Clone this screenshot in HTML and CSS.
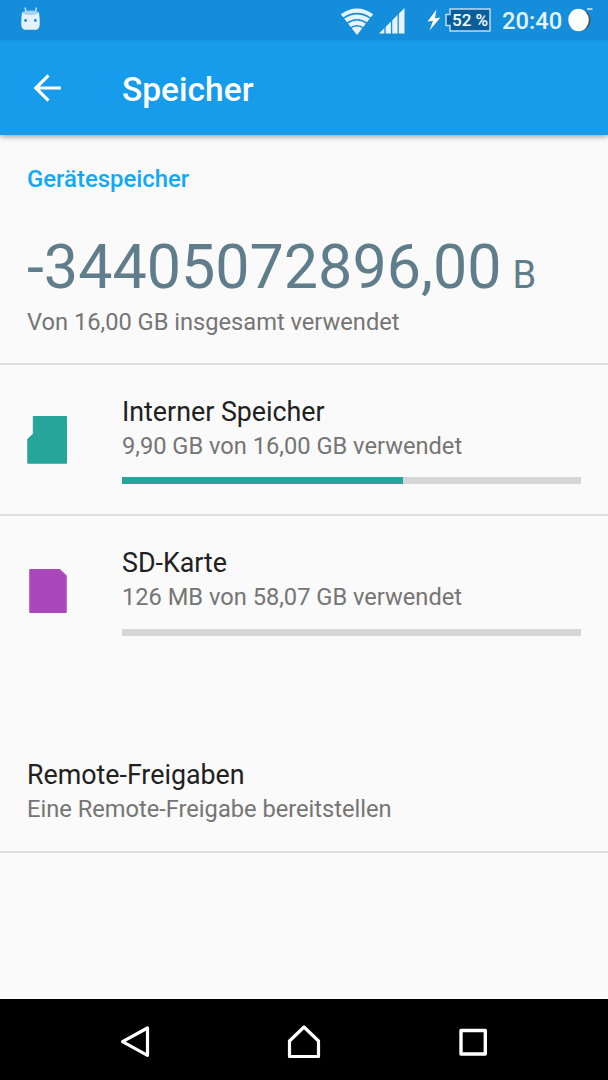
FILE: index.html
```html
<!DOCTYPE html>
<html lang="de">
<head>
<meta charset="utf-8">
<title>Speicher</title>
<link rel="stylesheet" href="styles.css">
</head>
<body>
<div class="screen">
  <div class="status-bar">
    <svg class="robot" width="22" height="26" viewBox="0 0 22 26">
      <path d="M5 .500l1.300 5M16.500 .500l-1.300 5" stroke="#d6ebf9" stroke-width="1.300" fill="none"/>
      <path d="M2 5.500Q1 13 1.300 17.500Q1.500 22.500 5 22.800H16Q19.500 22.500 19.700 17.500Q20 13 19 5.500Z" fill="#e5f2fc"/>
      <ellipse cx="10.500" cy="5.800" rx="8.500" ry="2.200" fill="#a5d2f1"/>
      <circle cx="5.600" cy="13.500" r="1.400" fill="#148ddb"/>
      <circle cx="15.400" cy="13.500" r="1.400" fill="#148ddb"/>
    </svg>
    <svg class="wifi" width="34" height="29" viewBox="0 0 34 29">
      <path d="M17 28L.800 7.200Q17-4 33.200 7.200Z" fill="#e8f4fd"/>
      <path d="M2.500 11.800Q17 1.500 31.500 11.800M6.500 16.600Q17 9 27.500 16.600M10 21.300Q17 16.300 24 21.300" fill="none" stroke="#148ddb" stroke-width="1.600"/>
    </svg>
    <svg class="signal" width="26" height="26" viewBox="0 0 26 26">
      <path d="M0 25.500L25.500 0V25.500Z" fill="#e8f4fd"/>
      <path d="M6 17V26M12.600 10V26M19.200 4V26" stroke="#148ddb" stroke-width="1.300"/>
    </svg>
    <svg class="bolt" width="14" height="22" viewBox="0 0 14 22">
      <path d="M9.500.500L.500 12.500L6 11.800L2.500 21.500L13.500 8.500L8 9.200Z" fill="#fff"/>
    </svg>
    <div class="battery">
      <svg class="battery-shape" width="46" height="24" viewBox="0 0 46 24">
        <path d="M5 1H45V23H5V17.500H1V6.500H5Z" fill="#095f9c" stroke="#b9dcf3" stroke-width="1.500"/>
      </svg>
      <span class="percent">52 %</span>
    </div>
    <span class="clock">20:40</span>
    <svg class="moon" width="26" height="26" viewBox="0 0 26 26">
      <circle cx="11.500" cy="13" r="11" fill="#484f55"/>
      <ellipse cx="10.500" cy="13" rx="10.300" ry="11.200" fill="#fff"/>
      <path d="M19 2H24.500" stroke="#d5eafa" stroke-width="1.500"/>
    </svg>
  </div>
  <header class="app-bar">
    <svg class="back" width="28" height="28" viewBox="0 0 28 28">
      <path d="M14.500 1.300L1.800 14L14.500 26.700M2 14H27" fill="none" stroke="#fff" stroke-width="3.200"/>
    </svg>
    <h1 class="title">Speicher</h1>
  </header>
  <main class="content">
    <section class="summary">
      <h2 class="category">Gerätespeicher</h2>
      <div class="total"><span class="amount">-34405072896,00</span><span class="unit">B</span></div>
      <div class="sub">Von 16,00 GB insgesamt verwendet</div>
    </section>
    <section class="volume divided">
      <svg class="volume-icon" width="42" height="50" viewBox="0 0 42 50">
        <path d="M7.300 1.500H40.500V48.200H1.800V24L7.300 19Z" fill="#26a69a" stroke="#26a69a" stroke-linejoin="round"/>
      </svg>
      <div class="details">
        <div class="name">Interner Speicher</div>
        <div class="sub">9,90 GB von 16,00 GB verwendet</div>
        <div class="track"><div class="fill" style="width:61.2%"></div></div>
      </div>
    </section>
    <section class="volume">
      <svg class="volume-icon" width="42" height="50" viewBox="0 0 42 50">
        <path d="M3.800 3.500H33.800L40.200 9.500V46.500H3.800Z" fill="#ab47bc" stroke="#ab47bc" stroke-linejoin="round"/>
      </svg>
      <div class="details">
        <div class="name">SD-Karte</div>
        <div class="sub">126 MB von 58,07 GB verwendet</div>
        <div class="track"></div>
      </div>
    </section>
    <section class="remote">
      <div class="name">Remote-Freigaben</div>
      <div class="sub">Eine Remote-Freigabe bereitstellen</div>
    </section>
  </main>
  <nav class="nav-bar">
    <svg width="34" height="38" viewBox="0 0 34 38"><path d="M28.500 5V32.300L3.500 18.700Z" fill="none" stroke="#fff" stroke-width="3.200" stroke-linejoin="round"/></svg>
    <svg width="36" height="38" viewBox="0 0 36 38"><path d="M17 4L31.500 18V33.500H2.500V18Z" fill="none" stroke="#fff" stroke-width="3.200" stroke-linejoin="round"/></svg>
    <svg width="32" height="38" viewBox="0 0 32 38"><path d="M4 7.500H28.300V31H4Z" fill="none" stroke="#fff" stroke-width="3.400" stroke-linejoin="round"/></svg>
  </nav>
</div>
</body>
</html>
```
FILE: styles.css
```css
* { box-sizing: border-box; }
body { margin: 0; font-family: Roboto, "Liberation Sans", sans-serif; background: #fafafa; }
svg { display: block; flex: none; }
.screen { width: 608px; height: 1080px; display: flex; flex-direction: column; overflow: hidden; }

.status-bar { position: relative; z-index: 1; height: 41px; flex: none; display: flex; align-items: flex-start; background: #148ddb; border-bottom: 1px solid #1595e3; }
.robot { margin: 7px 0 0 20px; }
.wifi { margin: 7px 0 0 298px; }
.signal { margin: 8px 0 0 5px; }
.bolt { margin: 9px 0 0 22px; }
.battery { position: relative; width: 46px; height: 24px; margin: 8px 0 0 4px; }
.battery-shape { position: absolute; left: 0; top: 0; }
.percent { position: relative; display: block; padding-left: 7px; font-size: 17px; line-height: 24px; font-weight: 500; color: #fff; white-space: nowrap; }
.clock { width: 60px; margin: 7px 0 0 11px; font-size: 23.7px; line-height: 28px; font-weight: 500; color: #e5f3fd; white-space: nowrap; }
.moon { margin: 7px 0 0 6px; }

.app-bar { height: 94px; flex: none; display: flex; align-items: center; background: #169cea; box-shadow: 0 1px 6px rgba(0, 0, 0, .45); }
.back { margin: 0 0 0 34px; }
.title { margin: 3px 0 0 60px; font-size: 33.5px; line-height: 40px; font-weight: 500; color: #fff; }

.content { flex: 1; }
.summary { height: 230px; padding: 30px 27px 0; border-bottom: 2px solid #dedede; }
.category { margin: 0; font-size: 23.9px; line-height: 28px; font-weight: 500; color: #10a8fb; }
.total { display: flex; align-items: baseline; margin-top: 38px; height: 72px; line-height: 72px; color: #607d8b; white-space: nowrap; }
.amount { font-size: 61px; }
.unit { margin-left: 11px; font-size: 38px; }
.summary .sub { margin-top: 5px; }
.sub { font-size: 23.65px; line-height: 28px; color: #757575; white-space: nowrap; }
.name { font-size: 26.8px; line-height: 32px; color: #212121; white-space: nowrap; }

.volume { height: 151px; display: flex; padding: 31px 27px 0 26px; }
.divided { border-bottom: 2px solid #dedede; }
.volume-icon { margin-top: 19px; }
.details { flex: 1; margin-left: 54px; }
.details .sub { margin-top: 4px; }
.track { height: 7px; margin-top: 18px; background: #d6d6d6; }
.divided .track { margin-top: 17px; }
.fill { height: 100%; background: #26a69a; }

.remote { height: 165px; margin-top: 21px; padding: 71px 27px 0; border-bottom: 2px solid #dedede; }
.remote .sub { margin-top: 4px; }

.nav-bar { height: 81px; flex: none; display: flex; align-items: center; justify-content: space-between; padding: 5px 119px 0; background: #000; }
```
